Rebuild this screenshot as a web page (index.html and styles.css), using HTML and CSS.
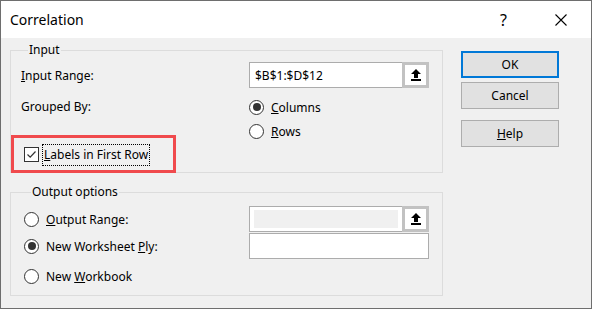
FILE: index.html
```html
<!DOCTYPE html>
<html lang="en">
<head>
    <meta charset="UTF-8">
    <title>Correlation</title>
    <link rel="stylesheet" href="styles.css">
</head>
<body>

<div class="window">
    <!-- Title bar -->
    <div class="titlebar">
        <span class="title">Correlation</span>
        <span class="title-help">?</span>
        <svg class="title-close" width="12" height="12" viewBox="0 0 12 12">
            <path d="M0.5 0.5 L11.5 11.5 M11.5 0.5 L0.5 11.5" stroke="#000" stroke-width="1.1" fill="none"/>
        </svg>
    </div>

    <div class="content">
        <div class="left">
            <!-- Input group -->
            <fieldset class="group group-input">
                <legend>Input</legend>
                <div class="row row-range">
                    <span class="field-label"><u>I</u>nput Range:</span>
                    <div class="refedit">
                        <input type="text" class="refedit-text" value="$B$1:$D$12">
                        <button class="refedit-btn">
                            <svg width="10" height="12" viewBox="0 0 10 12">
                                <path d="M5 0 L10 5 L7 5 L7 9 L3 9 L3 5 L0 5 Z" fill="#000"/>
                                <rect x="0" y="10" width="10" height="2" fill="#000"/>
                            </svg>
                        </button>
                    </div>
                </div>
                <div class="row row-grouped">
                    <span class="field-label">Grouped By:</span>
                    <div class="radio-list">
                        <div class="option"><span class="radio checked"></span><span><u>C</u>olumns</span></div>
                        <div class="option"><span class="radio"></span><span><u>R</u>ows</span></div>
                    </div>
                </div>
                <div class="row row-check">
                    <span class="checkbox">
                        <svg width="11" height="11" viewBox="0 0 11 11">
                            <path d="M1.5 5.5 L4.2 8.2 L9.5 2.5" stroke="#333" stroke-width="1.2" fill="none"/>
                        </svg>
                    </span>
                    <span class="focus-label"><u>L</u>abels in First Row</span>
                </div>
                <!-- annotation box -->
                <div class="highlight"></div>
            </fieldset>

            <!-- Output group -->
            <fieldset class="group group-output">
                <legend>Output options</legend>
                <div class="out-row">
                    <div class="option"><span class="radio"></span><span><u>O</u>utput Range:</span></div>
                    <div class="refedit">
                        <div class="refedit-text disabled"><span class="disabled-fill"></span></div>
                        <button class="refedit-btn">
                            <svg width="10" height="12" viewBox="0 0 10 12">
                                <path d="M5 0 L10 5 L7 5 L7 9 L3 9 L3 5 L0 5 Z" fill="#000"/>
                                <rect x="0" y="10" width="10" height="2" fill="#000"/>
                            </svg>
                        </button>
                    </div>
                </div>
                <div class="out-row row-ply">
                    <div class="option"><span class="radio checked"></span><span>New Worksheet <u>P</u>ly:</span></div>
                    <input type="text" class="plain-text" value="">
                </div>
                <div class="out-row row-book">
                    <div class="option"><span class="radio"></span><span>New <u>W</u>orkbook</span></div>
                </div>
            </fieldset>
        </div>

        <!-- Buttons -->
        <div class="buttons">
            <button class="btn btn-default">OK</button>
            <button class="btn">Cancel</button>
            <button class="btn btn-help"><u>H</u>elp</button>
        </div>
    </div>
</div>

</body>
</html>
```

FILE: styles.css
```css
body {
    margin: 0;
    padding: 0;
    font-family: "Noto Sans", "Open Sans", sans-serif;
    font-size: 12px;
    color: #000;
    background: #f0f0f0;
}

.window {
    width: 592px;
    height: 309px;
    box-sizing: border-box;
    border: 1px solid #6e6e6e;
    background-color: #f0f0f0;
}

.titlebar {
    height: 37px;
    background-color: #fff;
    display: flex;
    align-items: center;
}

.title {
    font-size: 14px;
    margin-left: 9px;
    flex: 1;
}

.title-help {
    font-size: 16px;
    margin-right: 48px;
}

.title-close {
    margin-right: 24px;
}

.content {
    display: flex;
    padding: 4px 0 0 9px;
}

.left {
    width: 433px;
}

.group {
    margin: 0;
    border: 1px solid #dcdcdc;
    position: relative;
}

.group legend {
    padding: 0 1px;
    margin-left: 7px;
    line-height: 16px;
}

.group-input {
    padding: 4px 0 6px 10px;
}

.row {
    display: flex;
}

.field-label {
    width: 228px;
}

.row-range {
    align-items: center;
}

.refedit {
    display: flex;
    width: 180px;
    height: 26px;
    box-sizing: border-box;
    border: 1px solid #acacac;
    background-color: #fff;
}

.refedit-text {
    flex: 1;
    min-width: 0;
    border: none;
    outline: none;
    margin: 0;
    padding: 0 0 0 5px;
    font: inherit;
    background: transparent;
}

.refedit-text.disabled {
    padding: 3px 4px;
    display: flex;
}

.disabled-fill {
    flex: 1;
    background-color: #f0f0f0;
}

.refedit-btn {
    width: 27px;
    margin: -1px -1px -1px 0;
    padding: 0;
    border: 3px solid #c2c2c2;
    background-color: #fff;
    display: flex;
    align-items: center;
    justify-content: center;
}

.row-grouped {
    margin-top: 7px;
}

.row-grouped .field-label {
    line-height: 24px;
}

.option {
    display: flex;
    align-items: center;
    height: 24px;
}

.radio {
    width: 15px;
    height: 15px;
    box-sizing: border-box;
    border: 1px solid #333;
    border-radius: 50%;
    background-color: #fff;
    margin-right: 7px;
    display: flex;
    align-items: center;
    justify-content: center;
}

.radio.checked::after {
    content: "";
    width: 8px;
    height: 8px;
    border-radius: 50%;
    background-color: #333;
}

.row-check {
    align-items: center;
    height: 23px;
    margin-left: 3px;
}

.checkbox {
    width: 15px;
    height: 15px;
    box-sizing: border-box;
    border: 1px solid #333;
    background-color: #fff;
    display: flex;
    align-items: center;
    justify-content: center;
    margin-right: 3px;
}

.focus-label {
    border: 1px dotted #000;
    padding: 1px 1px 2px 1px;
}

.highlight {
    position: absolute;
    left: 0;
    top: 77px;
    width: 165px;
    height: 38px;
    box-sizing: border-box;
    border: 3px solid #f04a4d;
}

.group-output {
    margin-top: 11px;
    padding: 6px 0 7px 13px;
}

.out-row {
    display: flex;
    align-items: center;
    height: 26px;
}

.out-row .option {
    width: 225px;
}

.row-ply {
    margin-top: 1px;
}

.plain-text {
    width: 180px;
    height: 26px;
    box-sizing: border-box;
    border: 1px solid #acacac;
    margin: 0;
    padding: 0 5px;
    font: inherit;
    outline: none;
}

.row-book {
    margin-top: 5px;
    height: 24px;
}

.buttons {
    display: flex;
    flex-direction: column;
    margin-left: 18px;
    padding-top: 9px;
}

.btn {
    width: 98px;
    height: 27px;
    margin: 0 0 4px 0;
    padding: 0;
    font: inherit;
    background-color: #e1e1e1;
    border: 1px solid #adadad;
}

.btn-default {
    border: 2px solid #0078d7;
}

.btn-help {
    margin-top: 7px;
}
```
